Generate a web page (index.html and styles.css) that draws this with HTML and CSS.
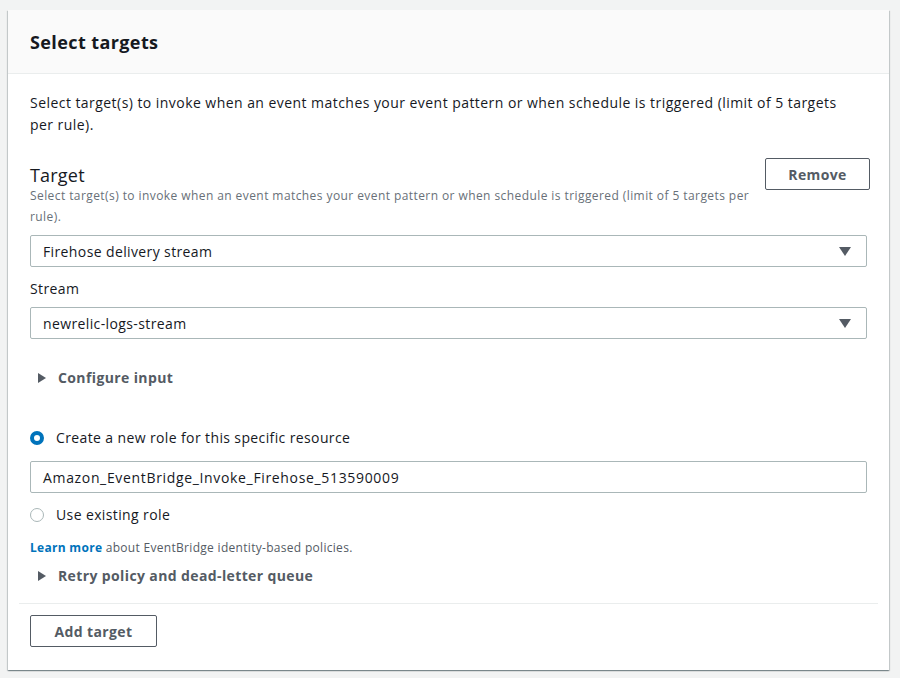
FILE: index.html
```html
<!DOCTYPE html>
<html>
<head>
<meta charset="utf-8">
<link rel="stylesheet" href="styles.css">
</head>
<body>
<div class="card">
  <div class="card-header"><h2>Select targets</h2></div>
  <div class="card-body">
    <p class="intro">Select target(s) to invoke when an event matches your event pattern or when schedule is triggered (limit of 5 targets per rule).</p>
    <div class="target-head">
      <div class="target-text">
        <div class="target-title">Target</div>
        <div class="target-desc">Select target(s) to invoke when an event matches your event pattern or when schedule is triggered (limit of 5 targets per rule).</div>
      </div>
      <button class="btn remove">Remove</button>
    </div>
    <div class="select first-select"><span>Firehose delivery stream</span><span class="caret"></span></div>
    <div class="label">Stream</div>
    <div class="select"><span>newrelic-logs-stream</span><span class="caret"></span></div>
    <div class="expander first"><span class="tri"></span>Configure input</div>
    <div class="radio-row checked-row"><span class="radio checked"></span>Create a new role for this specific resource</div>
    <div class="input">Amazon_EventBridge_Invoke_Firehose_513590009</div>
    <div class="radio-row existing-row"><span class="radio"></span>Use existing role</div>
    <div class="learn"><a>Learn more</a> about EventBridge identity-based policies.</div>
    <div class="expander second"><span class="tri"></span>Retry policy and dead-letter queue</div>
  </div>
  <div class="card-footer">
    <button class="btn add">Add target</button>
  </div>
</div>
</body>
</html>
```
FILE: styles.css
```css
* { box-sizing: border-box; }
html, body { margin: 0; padding: 0; }
body {
  background: #f2f3f3;
  font-family: "Open Sans", "Noto Sans", sans-serif;
  color: #16191f;
  width: 900px;
  height: 678px;
  overflow: hidden;
  padding: 10px 0 0 8px;
  letter-spacing: 0.38px;
}
.card {
  width: 881px;
  height: 660px;
  background: #fff;
  box-shadow: 0 1px 1px 0 rgba(0,28,36,0.3), 1px 1px 1px 0 rgba(0,28,36,0.15), -1px 1px 1px 0 rgba(0,28,36,0.15);
}
.card-header {
  background: #fafafa;
  border-bottom: 1px solid #eaeded;
  height: 64px;
  padding: 0 22px;
  display: flex;
  align-items: center;
}
.card-header h2 {
  margin: 0;
  font-size: 18px;
  font-weight: 700;
  letter-spacing: 0.4px;
}
.card-body { padding: 18px 22px 0 22px; }
.intro {
  margin: 0;
  font-size: 14px;
  line-height: 22px;
  width: 820px;
  letter-spacing: 0.45px;
}
.target-head {
  display: flex;
  justify-content: space-between;
  align-items: flex-start;
  margin-top: 22px;
}
.target-text { width: 730px; padding-top: 5px; }
.target-title { font-size: 18px; line-height: 24px; letter-spacing: 0.2px; }
.target-desc { font-size: 12px; line-height: 21px; color: #687078; margin-top: -2px; letter-spacing: 0.42px; }
.btn {
  font-family: inherit;
  letter-spacing: 0.38px;
  background: #fff;
  border: 1px solid #545b64;
  border-radius: 2px;
  color: #545b64;
  font-weight: 700;
  font-size: 14px;
  padding: 0;
  height: 32px;
}
.remove { width: 105px; margin-right: -3px; }
.select, .input {
  width: 837px;
  height: 32px;
  border: 1px solid #aab7b8;
  border-radius: 2px;
  padding: 0 12px;
  display: flex;
  align-items: center;
  justify-content: space-between;
  font-size: 14px;
}
.select { margin-top: 8px; }
.caret {
  width: 0; height: 0;
  border-left: 6px solid transparent;
  border-right: 6px solid transparent;
  border-top: 9px solid #545b64;
  margin-right: 3px;
}
.label { font-size: 14px; line-height: 20px; margin-top: 12px; }
.expander {
  display: flex;
  align-items: center;
  font-size: 14px;
  line-height: 20px;
  font-weight: 700;
  color: #545b64;
  padding-left: 8px;
}
.expander.first { margin-top: 29px; }
.expander.second { margin-top: 10px; }
.tri {
  width: 0; height: 0;
  border-top: 5px solid transparent;
  border-bottom: 5px solid transparent;
  border-left: 8px solid #545b64;
  margin-right: 12px;
}
.radio-row {
  display: flex;
  align-items: center;
  font-size: 14px;
  line-height: 22px;
}
.checked-row { margin-top: 39px; }
.input { margin-top: 12px; letter-spacing: 0.66px; }
.existing-row { margin-top: 11px; }
.radio {
  width: 14px; height: 14px;
  border-radius: 50%;
  border: 1px solid #aab7b8;
  margin-right: 12px;
}
.radio.checked { border: 4px solid #0073bb; }
.learn { font-size: 12px; color: #545b64; margin-top: 14px; line-height: 16px; letter-spacing: 0.3px; }
.learn a { color: #0073bb; font-weight: 700; }
.card-footer {
  margin: 17px 11px 0 11px;
  border-top: 1px solid #eaeded;
  padding: 11px 11px 0 11px;
}
.add { width: 127px; }
```
